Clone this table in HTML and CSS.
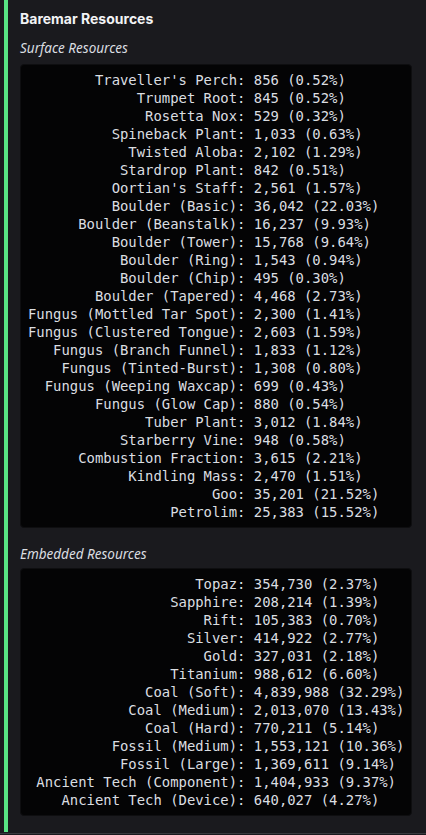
FILE: index.html
```html
<!DOCTYPE html>
<html>
<head>
<meta charset="utf-8">
<link rel="stylesheet" href="styles.css">
</head>
<body>
<div class="page">
  <div class="embed">
    <div class="title">Baremar Resources</div>
    <div class="section">Surface Resources</div>
    <pre class="code first">        Traveller's Perch: 856 (0.52%)
             Trumpet Root: 845 (0.52%)
              Rosetta Nox: 529 (0.32%)
          Spineback Plant: 1,033 (0.63%)
            Twisted Aloba: 2,102 (1.29%)
           Stardrop Plant: 842 (0.51%)
          Oortian's Staff: 2,561 (1.57%)
          Boulder (Basic): 36,042 (22.03%)
      Boulder (Beanstalk): 16,237 (9.93%)
          Boulder (Tower): 15,768 (9.64%)
           Boulder (Ring): 1,543 (0.94%)
           Boulder (Chip): 495 (0.30%)
        Boulder (Tapered): 4,468 (2.73%)
Fungus (Mottled Tar Spot): 2,300 (1.41%)
Fungus (Clustered Tongue): 2,603 (1.59%)
   Fungus (Branch Funnel): 1,833 (1.12%)
    Fungus (Tinted-Burst): 1,308 (0.80%)
  Fungus (Weeping Waxcap): 699 (0.43%)
        Fungus (Glow Cap): 880 (0.54%)
              Tuber Plant: 3,012 (1.84%)
           Starberry Vine: 948 (0.58%)
      Combustion Fraction: 3,615 (2.21%)
            Kindling Mass: 2,470 (1.51%)
                      Goo: 35,201 (21.52%)
                 Petrolim: 25,383 (15.52%)</pre>
    <div class="section second">Embedded Resources</div>
    <pre class="code">                    Topaz: 354,730 (2.37%)
                 Sapphire: 208,214 (1.39%)
                     Rift: 105,383 (0.70%)
                   Silver: 414,922 (2.77%)
                     Gold: 327,031 (2.18%)
                 Titanium: 988,612 (6.60%)
              Coal (Soft): 4,839,988 (32.29%)
            Coal (Medium): 2,013,070 (13.43%)
              Coal (Hard): 770,211 (5.14%)
          Fossil (Medium): 1,553,121 (10.36%)
           Fossil (Large): 1,369,611 (9.14%)
 Ancient Tech (Component): 1,404,933 (9.37%)
    Ancient Tech (Device): 640,027 (4.27%)</pre>
  </div>
  <div class="divider"></div>
</div>
</body>
</html>
```
FILE: styles.css
```css
html, body {
  margin: 0;
  padding: 0;
  background: #1a1a1e;
}
.page {
  width: 426px;
  height: 835px;
  overflow: hidden;
  background: #1a1a1e;
  display: flex;
  flex-direction: column;
}
.embed {
  margin-left: 4px;
  border-left: 4px solid #58e484;
  padding: 9px 14px 15px 12px;
  display: flex;
  flex-direction: column;
  height: 832px;
  box-sizing: border-box;
}
.title {
  font-family: Inter, "Noto Sans", sans-serif;
  font-weight: 700;
  font-size: 14px;
  line-height: 20px;
  color: #f2f3f5;
}
.section {
  margin-top: 10px;
  font-family: "Noto Sans", Inter, sans-serif;
  font-style: italic;
  font-size: 13.5px;
  line-height: 18px;
  color: #dbdee1;
}
.section.second {
  margin-top: 17px;
}
.code {
  margin: 5px 0 0 0;
  padding: 6px 7px;
  background: #040405;
  border: 1px solid #0e0e10;
  border-radius: 4px;
  font-family: "DejaVu Sans Mono", "Liberation Mono", monospace;
  font-size: 13.9px;
  line-height: 18px;
  color: #dbdee1;
  white-space: pre;
  box-sizing: border-box;
}
.code.first {
  margin-top: 7px;
}
.divider {
  margin-top: 1px;
  height: 1px;
  background: #38393e;
}
```
